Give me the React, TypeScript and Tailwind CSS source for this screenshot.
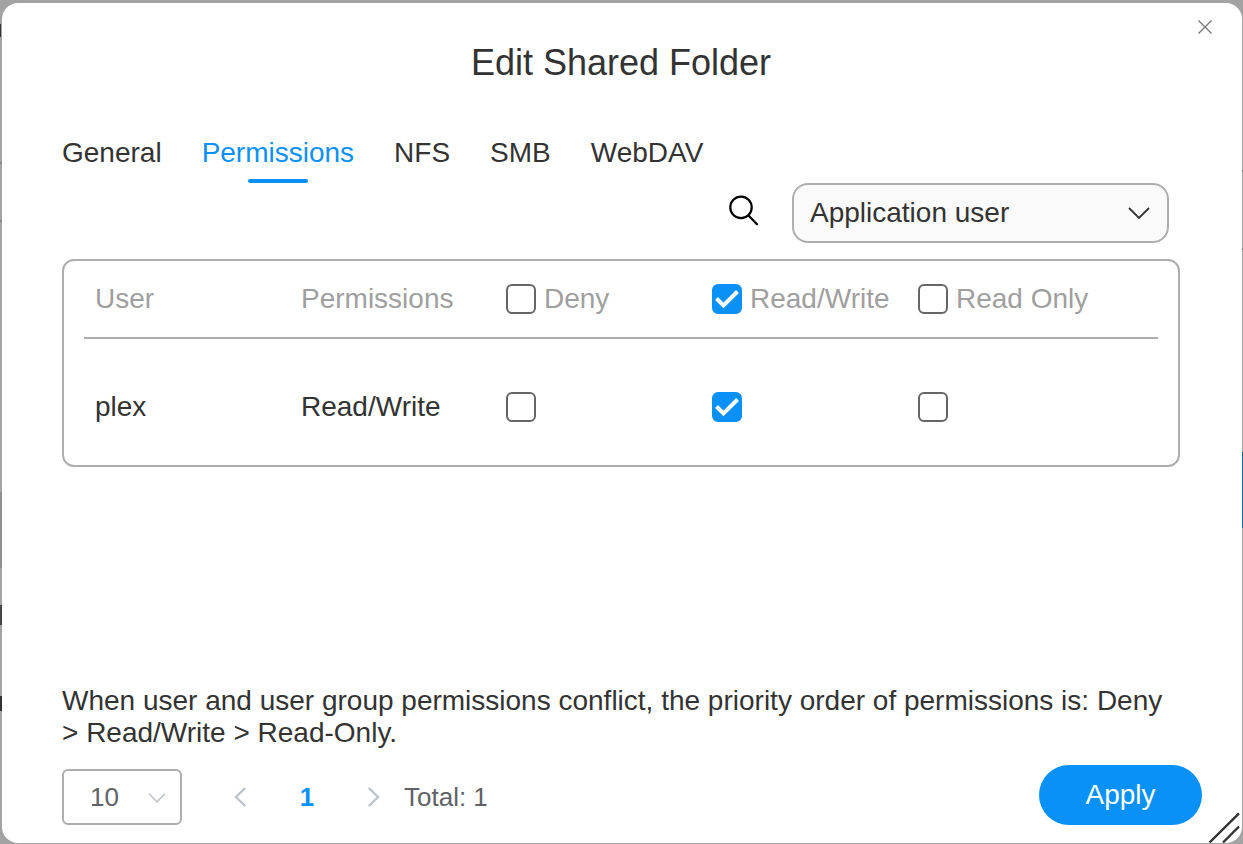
import { useState, type ReactNode } from 'react';

const tabs = ['General', 'Permissions', 'NFS', 'SMB', 'WebDAV'];
const levels = ['Deny', 'Read/Write', 'Read Only'];
const users = [{ name: 'plex' }];

function Checkbox({ checked, onChange, label, children }: {
    checked: boolean;
    onChange: () => void;
    label?: string;
    children?: ReactNode;
}) {
    return (
        <label className="flex items-center gap-2 whitespace-nowrap">
            <span className="grid size-[30px] shrink-0">
                <input
                    type="checkbox"
                    aria-label={label}
                    checked={checked}
                    onChange={onChange}
                    className="peer col-start-1 row-start-1 size-[30px] appearance-none rounded-md border-2 border-[#666] bg-white checked:border-[#0a91f7] checked:bg-[#0a91f7]"
                />
                <svg viewBox="0 0 30 30" className="pointer-events-none invisible col-start-1 row-start-1 size-[30px] peer-checked:visible" fill="none" stroke="#fff" strokeWidth="4">
                    <path d="M4.500 14.500 11.500 21.500 25.500 7.500" />
                </svg>
            </span>
            {children}
        </label>
    );
}

// The dimmed page that stays visible around the dialog
function Backdrop() {
    return (
        <div className="absolute inset-0 flex justify-between bg-[#a3a3a3]" aria-hidden="true">
            <div className="w-[2px]">
                <div className="mt-6 h-[13px] w-px bg-[#333]" />
                <div className="mt-[125px] h-[2px] bg-[#858585]" />
                <div className="mt-[56px] h-[2px] bg-[#858585]" />
                <div className="mt-[270px] h-[76px] bg-[#8f8f8f]" />
                <div className="mt-[37px] h-5 bg-[#444]" />
                <div className="mt-[71px] h-[15px] bg-[#333]" />
            </div>
            <div className="w-px">
                <div className="mt-[170px] h-[2px] bg-[#777]" />
                <div className="mt-[76px] h-[2px] bg-[#777]" />
                <div className="mt-[202px] h-[76px] bg-[#1668a5]" />
            </div>
        </div>
    );
}

function App() {
    const [tab, setTab] = useState('Permissions');
    const [level, setLevel] = useState('Read/Write');

    return (
        <div className="relative flex min-h-screen pt-[3px] pr-px pb-px pl-[2px] font-['Liberation_Sans',Arial,sans-serif] text-[28px] leading-8 text-[#333]">
            <Backdrop />
            <div role="dialog" aria-labelledby="title" className="relative flex flex-1 flex-col overflow-hidden rounded-2xl bg-white">
                <button aria-label="Close" className="absolute top-3 right-[25px] grid size-6 place-items-center">
                    <svg viewBox="0 0 14 14" className="size-[14px]" fill="none" stroke="#7a7a7a" strokeWidth="1.4">
                        <path d="M.5.5l13 13M13.5.5l-13 13" />
                    </svg>
                </button>

                <div className="flex flex-1 flex-col pt-10 pr-[62px] pl-15">
                    <h1 id="title" className="text-center text-[36px] leading-10">Edit Shared Folder</h1>

                    <nav className="mt-[50px] flex items-start gap-10" role="tablist">
                        {tabs.map((name) => (
                            <button
                                key={name}
                                role="tab"
                                aria-selected={tab === name}
                                onClick={() => setTab(name)}
                                className={tab === name ? 'flex flex-col items-center gap-[6px] text-[#0a91f7]' : 'flex flex-col items-center'}
                            >
                                <span className="leading-10">{name}</span>
                                {tab === name && <span className="h-1 w-15 rounded-full bg-[#0a91f7]" />}
                            </button>
                        ))}
                    </nav>

                    <div className="mr-[11px] flex items-center justify-end gap-8">
                        <button aria-label="Search">
                            <svg viewBox="0 0 32 32" className="size-8 overflow-visible" fill="none" stroke="#000" strokeWidth="2.2" strokeLinecap="round">
                                <circle cx="13" cy="10.400" r="10.700" />
                                <path d="M20.500 18.600 29 27.200" />
                            </svg>
                        </button>
                        <div className="relative">
                            <select aria-label="User type" className="block h-15 w-[377px] appearance-none rounded-2xl border-2 border-[#aeaeae] bg-[#fafafa] pl-4">
                                <option>Application user</option>
                            </select>
                            <svg viewBox="0 0 22 12" className="pointer-events-none absolute top-6 right-[19px] h-3 w-[22px]" fill="none" stroke="#333" strokeWidth="1.8">
                                <path d="M1 1l10 10L21 1" />
                            </svg>
                        </div>
                    </div>

                    <div className="mt-4 rounded-xl border-2 border-[#aeaeae] px-5">
                        <table className="w-full table-fixed text-left">
                            <thead className="text-[#9f9f9f]">
                                <tr className="border-b-2 border-[#aeaeae]">
                                    <th className="h-[77px] w-[206px] pl-[11px] font-normal">User</th>
                                    <th className="w-[206px] pl-[11px] font-normal">Permissions</th>
                                    {levels.map((name) => (
                                        <th key={name} className="w-[206px] pl-[10px] font-normal last:w-auto">
                                            <Checkbox checked={level === name} onChange={() => setLevel(name)}>{name}</Checkbox>
                                        </th>
                                    ))}
                                </tr>
                            </thead>
                            <tbody>
                                {users.map((user) => (
                                    <tr key={user.name}>
                                        <td className="h-[127px] pt-[10px] pl-[11px]">{user.name}</td>
                                        <td className="pt-[10px] pl-[11px]">{level}</td>
                                        {levels.map((name) => (
                                            <td key={name} className="pt-[10px] pl-[10px]">
                                                <Checkbox label={user.name + ' ' + name} checked={level === name} onChange={() => setLevel(name)} />
                                            </td>
                                        ))}
                                    </tr>
                                ))}
                            </tbody>
                        </table>
                    </div>

                    <p className="mt-auto">
                        When user and user group permissions conflict, the priority order of permissions is: Deny &gt; Read/Write &gt; Read-Only.
                    </p>
                </div>

                <footer className="mt-4 flex items-end pr-10 pb-[18px] pl-15">
                    <div className="flex items-center text-[26px] text-[#606266]">
                        <div className="relative">
                            <select aria-label="Rows per page" className="block h-14 w-[120px] appearance-none rounded-md border-2 border-[#aeaeae] bg-white pl-[26px]">
                                <option>10</option>
                            </select>
                            <svg viewBox="0 0 18 10" className="pointer-events-none absolute top-6 right-4 h-[10px] w-[18px]" fill="none" stroke="#c0c4cc" strokeWidth="1.6">
                                <path d="M1 .8l8 8 8-8" />
                            </svg>
                        </div>
                        <button aria-label="Previous page" className="ml-7 grid h-14 w-15 place-items-center">
                            <svg viewBox="0 0 12 20" className="h-5 w-3" fill="none" stroke="#c0c4cc" strokeWidth="2.4" strokeLinecap="round">
                                <path d="M10.500 1.600 2 10l8.500 8.400" />
                            </svg>
                        </button>
                        <button className="h-14 w-[74px] font-bold text-[#0a91f7]">1</button>
                        <button aria-label="Next page" className="grid h-14 w-15 place-items-center">
                            <svg viewBox="0 0 12 20" className="h-5 w-3" fill="none" stroke="#c0c4cc" strokeWidth="2.4" strokeLinecap="round">
                                <path d="M1.500 1.600 10 10l-8.500 8.400" />
                            </svg>
                        </button>
                        <span>Total: 1</span>
                    </div>
                    <button className="ml-auto h-15 w-[163px] rounded-full bg-[#0a91f7] text-white">Apply</button>
                </footer>

                {/* resize grip */}
                <svg viewBox="0 0 34 32" className="absolute right-0 bottom-0 h-8 w-[34px]" fill="none" stroke="#333" strokeWidth="2.4">
                    <path d="M1.500 31.500 31 2.400M15 31.500 31 15.500" />
                </svg>
            </div>
        </div>
    );
}

export default App;
